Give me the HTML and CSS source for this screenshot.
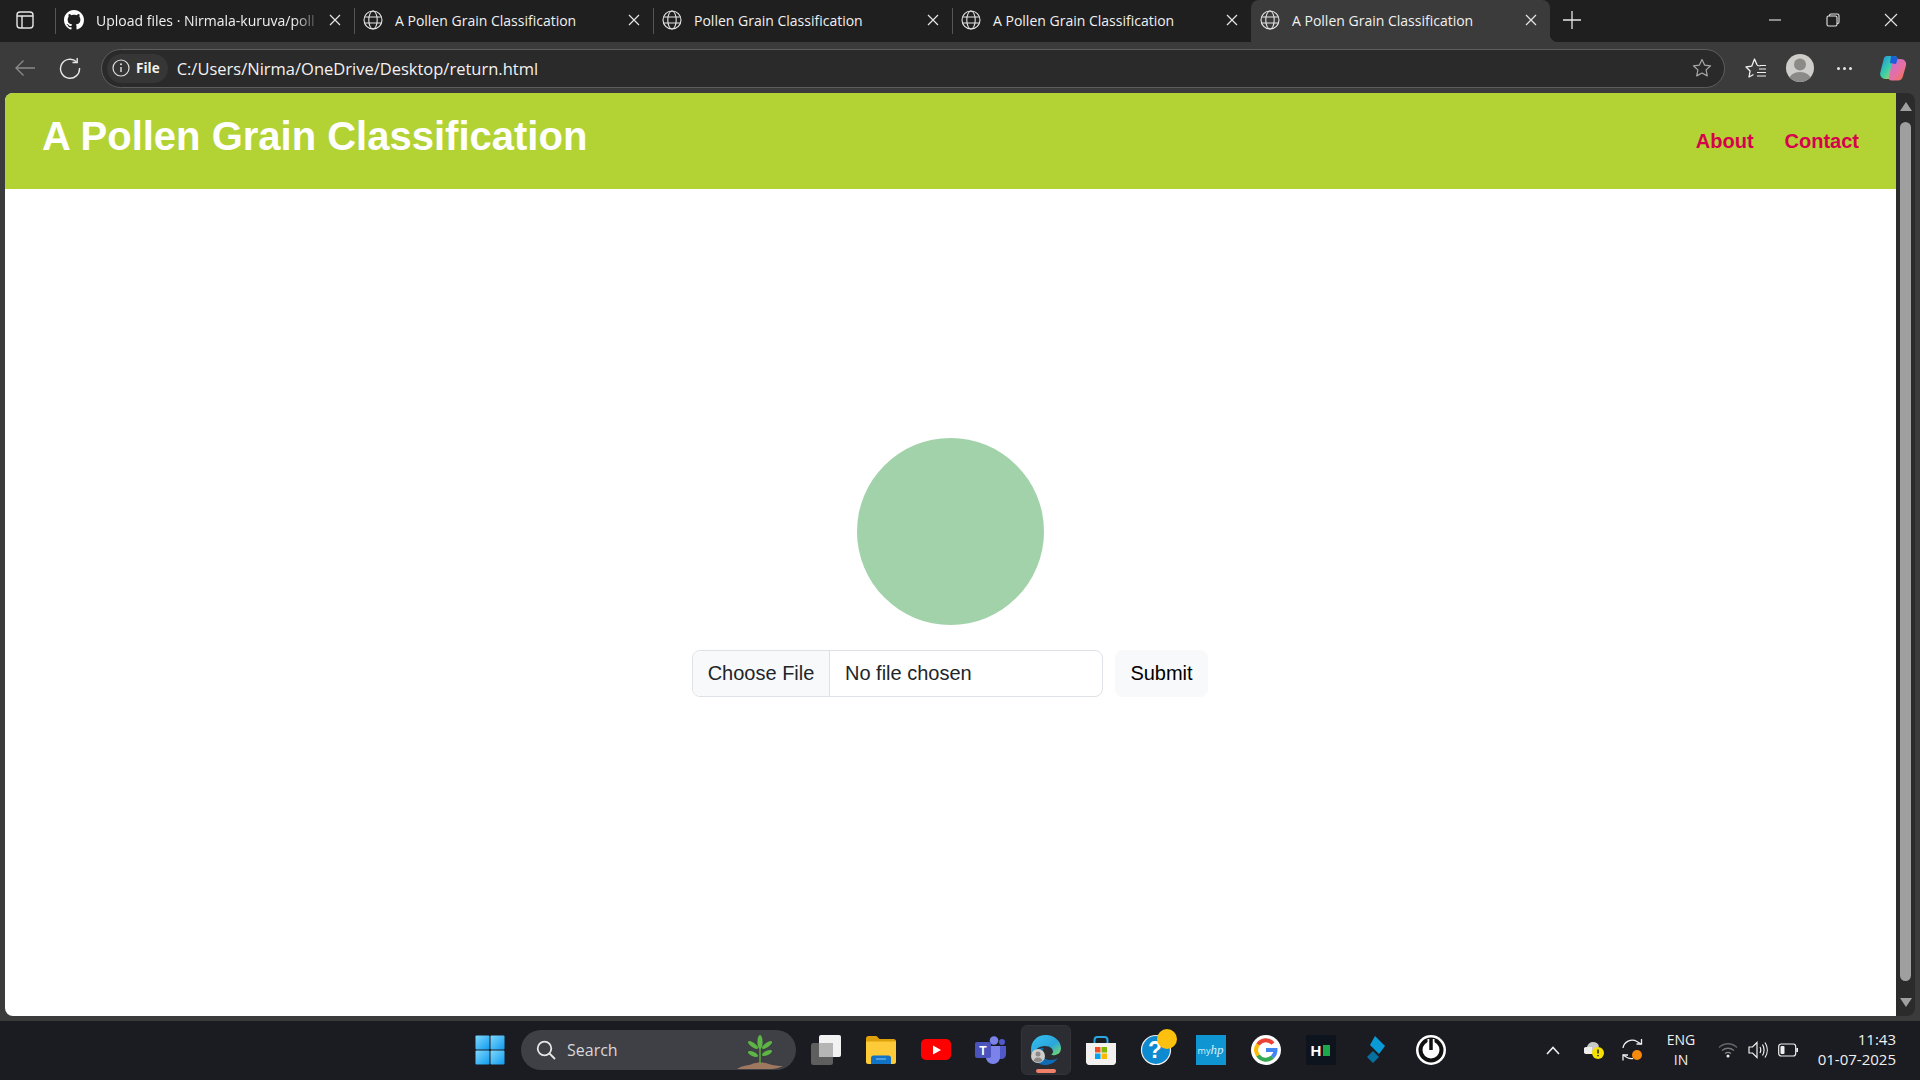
FILE: index.html
```html
<!DOCTYPE html>
<html lang="en">
<head>
  <meta charset="UTF-8">
  <title>A Pollen Grain Classification</title>
  <link rel="stylesheet" href="styles.css">
</head>
<body>
  <svg class="defs" width="0" height="0">
    <symbol id="globe" viewBox="0 0 20 20">
      <g fill="none" stroke="#e6e6e6" stroke-width="1.1">
        <circle cx="10" cy="10" r="9"/>
        <ellipse cx="10" cy="10" rx="4.2" ry="9"/>
        <path d="M1.6 7h16.8M1.6 13h16.8"/>
      </g>
    </symbol>
    <symbol id="close" viewBox="0 0 12 12">
      <path d="M1 1l10 10M11 1L1 11" fill="none" stroke="#e6e6e6" stroke-width="1.2"/>
    </symbol>
    <linearGradient id="edgeA" x1="0" y1="0" x2="1" y2="1">
      <stop offset="0" stop-color="#35c1f1"/>
      <stop offset="0.6" stop-color="#2aa5dc"/>
      <stop offset="1" stop-color="#7ee05a"/>
    </linearGradient>
    <linearGradient id="copA" x1="0" y1="0" x2="1" y2="1">
      <stop offset="0" stop-color="#1f8fe8"/>
      <stop offset="0.5" stop-color="#3ad0a8"/>
      <stop offset="1" stop-color="#f7c92f"/>
    </linearGradient>
    <linearGradient id="copB" x1="0" y1="0" x2="1" y2="1">
      <stop offset="0" stop-color="#c56ee0"/>
      <stop offset="0.6" stop-color="#e86f9c"/>
      <stop offset="1" stop-color="#f5752f"/>
    </linearGradient>
    <linearGradient id="winA" x1="0" y1="0" x2="1" y2="1">
      <stop offset="0" stop-color="#7fd8fb"/>
      <stop offset="1" stop-color="#0f9bf0"/>
    </linearGradient>
  </svg>

  <div class="tabstrip">
    <div class="sidebar-btn">
      <svg width="18" height="18" viewBox="0 0 18 18"><g fill="none" stroke="#e6e6e6" stroke-width="1.4"><rect x="1" y="1" width="16" height="16" rx="3"/><path d="M1 5h16M6 5v12"/></g></svg>
    </div>
    <div class="tab">
      <svg class="tab-icon" width="20" height="20" viewBox="0 0 16 16"><path fill="#fff" d="M8 0C3.58 0 0 3.58 0 8c0 3.54 2.29 6.53 5.47 7.59.4.07.55-.17.55-.38 0-.19-.01-.82-.01-1.49-2.01.37-2.53-.49-2.69-.94-.09-.23-.48-.94-.82-1.13-.28-.15-.68-.52-.01-.53.63-.01 1.08.58 1.23.82.72 1.21 1.87.87 2.33.66.07-.52.28-.87.51-1.07-1.78-.2-3.64-.89-3.64-3.95 0-.87.31-1.59.82-2.15-.08-.2-.36-1.02.08-2.12 0 0 .67-.21 2.2.82.64-.18 1.32-.27 2-.27.68 0 1.36.09 2 .27 1.53-1.04 2.2-.82 2.2-.82.44 1.1.16 1.92.08 2.12.51.56.82 1.27.82 2.15 0 3.07-1.87 3.75-3.65 3.95.29.25.54.73.54 1.48 0 1.07-.01 1.93-.01 2.2 0 .21.15.46.55.38A8.013 8.013 0 0016 8c0-4.42-3.58-8-8-8z"/></svg>
      <span class="tab-title tab-title-fade">Upload files · Nirmala-kuruva/poll</span>
      <svg class="tab-close" width="12" height="12"><use href="#close"/></svg>
    </div>
    <div class="tab">
      <svg class="tab-icon" width="20" height="20"><use href="#globe"/></svg>
      <span class="tab-title">A Pollen Grain Classification</span>
      <svg class="tab-close" width="12" height="12"><use href="#close"/></svg>
    </div>
    <div class="tab">
      <svg class="tab-icon" width="20" height="20"><use href="#globe"/></svg>
      <span class="tab-title">Pollen Grain Classification</span>
      <svg class="tab-close" width="12" height="12"><use href="#close"/></svg>
    </div>
    <div class="tab">
      <svg class="tab-icon" width="20" height="20"><use href="#globe"/></svg>
      <span class="tab-title">A Pollen Grain Classification</span>
      <svg class="tab-close" width="12" height="12"><use href="#close"/></svg>
    </div>
    <div class="tab tab-active">
      <svg class="tab-icon" width="20" height="20"><use href="#globe"/></svg>
      <span class="tab-title">A Pollen Grain Classification</span>
      <svg class="tab-close" width="12" height="12"><use href="#close"/></svg>
    </div>
    <svg class="new-tab" width="18" height="18" viewBox="0 0 18 18"><path d="M9 0v18M0 9h18" stroke="#e6e6e6" stroke-width="1.3"/></svg>
    <div class="win-controls">
      <svg width="14" height="14" viewBox="0 0 14 14"><path d="M1 7h12" stroke="#e6e6e6" stroke-width="1.1"/></svg>
      <svg width="14" height="14" viewBox="0 0 14 14"><g fill="none" stroke="#e6e6e6" stroke-width="1.1"><rect x="1" y="3" width="10" height="10" rx="1.5"/><path d="M3.5 3V2.5A1.5 1.5 0 0 1 5 1h6.5A1.5 1.5 0 0 1 13 2.500V9a1.500 1.500 0 0 1-1.500 1.500H11"/></g></svg>
      <svg width="14" height="14" viewBox="0 0 14 14"><path d="M1 1l12 12M13 1L1 13" stroke="#e6e6e6" stroke-width="1.1"/></svg>
    </div>
  </div>

  <div class="toolbar">
    <svg class="tool-back" width="22" height="18" viewBox="0 0 22 18"><path d="M21 9H2M9.500 1.500L2 9l7.500 7.500" fill="none" stroke="#8a8a8a" stroke-width="1.3"/></svg>
    <svg class="tool-reload" width="22" height="22" viewBox="0 0 22 22"><path d="M17.500 4.800A9.500 9.500 0 1 0 20.500 11" fill="none" stroke="#e8e8e8" stroke-width="1.4"/><path d="M18.200 1v4.500h-4.700" fill="none" stroke="#e8e8e8" stroke-width="1.4"/></svg>
    <div class="address">
      <div class="file-pill">
        <svg width="18" height="18" viewBox="0 0 18 18"><circle cx="9" cy="9" r="8" fill="none" stroke="#e0e0e0" stroke-width="1.2"/><path d="M9 8v5" stroke="#e0e0e0" stroke-width="1.4"/><circle cx="9" cy="5.300" r="1" fill="#e0e0e0"/></svg>
        <span>File</span>
      </div>
      <span class="url">C:/Users/Nirma/OneDrive/Desktop/return.html</span>
      <svg class="addr-star" width="20" height="20" viewBox="0 0 20 20"><path d="M10 1.500l2.600 5.600 6 .7-4.500 4.100 1.200 6L10 15l-5.300 2.900 1.200-6L1.400 7.800l6-.7z" fill="none" stroke="#a8a8a8" stroke-width="1.200" stroke-linejoin="round"/></svg>
    </div>
    <svg class="tool-fav" width="22" height="22" viewBox="0 0 22 22"><path d="M8.500 17.500L4 20l1.100-6L1 10l5.700-.8L9.500 2l2.600 6" fill="none" stroke="#f0f0f0" stroke-width="1.300" stroke-linejoin="round"/><path d="M12 8.500l3.500.5M14 12h7M12 15.500h9M12 19h9M15 8.500h6" fill="none" stroke="#f0f0f0" stroke-width="1.200"/></svg>
    <svg class="tool-avatar" width="28" height="28" viewBox="0 0 28 28"><defs><clipPath id="avatarClip"><circle cx="14" cy="14" r="14"/></clipPath></defs><circle cx="14" cy="14" r="14" fill="#cfcdca"/><g clip-path="url(#avatarClip)" fill="#8c8a88"><circle cx="14" cy="10.500" r="6"/><ellipse cx="14" cy="26" rx="11" ry="8"/></g></svg>
    <div class="tool-dots"><i></i><i></i><i></i></div>
    <svg class="tool-copilot" width="28" height="28" viewBox="0 0 28 28">
      <path d="M8 2h7c2 0 3 1 3.600 3l-5 17c-.5 2-2 3-4 3H6.500C3 25 .5 22 1.300 18.500L4.500 6C5 3.500 6 2 8 2z" fill="url(#copA)"/>
      <path d="M13 8c.6-2 1.600-3 3.600-3h5C25.500 5 27.800 8 27 11.500L24 22c-.7 3-2.500 4.500-5 4.500h-6.500c-2 0-3-1-2.500-3z" fill="url(#copB)"/>
      <path d="M12 2h3c2 0 3 1 3.600 3L17 10l-6-1z" fill="#1b5fd6"/>
    </svg>
  </div>

  <div class="viewport">
    <div class="page">
      <header class="site-header">
        <h1>A Pollen Grain Classification</h1>
        <nav class="site-nav">
          <a href="#">About</a>
          <a href="#">Contact</a>
        </nav>
      </header>
      <main class="upload">
        <div class="preview-circle"></div>
        <form class="upload-form">
          <div class="file-input">
            <span class="file-btn">Choose File</span>
            <span class="file-name">No file chosen</span>
          </div>
          <button type="button" class="submit-btn">Submit</button>
        </form>
      </main>
    </div>
    <div class="scrollbar">
      <span class="arrow-up"></span>
      <span class="thumb"></span>
      <span class="arrow-down"></span>
    </div>
  </div>

  <footer class="taskbar">
    <div class="task-icon task-win">
      <svg width="30" height="30" viewBox="0 0 30 30"><g fill="url(#winA)"><rect x="0.500" y="0.500" width="14" height="14" rx="1"/><rect x="15.500" y="0.500" width="14" height="14" rx="1"/><rect x="0.500" y="15.500" width="14" height="14" rx="1"/><rect x="15.500" y="15.500" width="14" height="14" rx="1"/></g></svg>
    </div>
    <div class="task-search">
      <svg width="20" height="20" viewBox="0 0 20 20"><circle cx="8.500" cy="8.500" r="6.800" fill="none" stroke="#e6e6e6" stroke-width="1.800"/><path d="M13.500 13.500L19 19" stroke="#e6e6e6" stroke-width="1.800"/></svg>
      <span>Search</span>
      <svg class="plant" width="46" height="36" viewBox="0 0 46 36">
        <path d="M0 35c6-4 10-3 15-5 5-2 12-2 17 0 4 1.500 9 2 14 2-4 2-8 3-12 3H4z" fill="#a07860"/>
        <path d="M23 30V12" stroke="#59a83a" stroke-width="1.500"/>
        <g fill="#5cb545"><ellipse cx="23" cy="8" rx="2.600" ry="7"/><ellipse cx="16" cy="11" rx="6" ry="2.200" transform="rotate(35 16 11)"/><ellipse cx="30" cy="11" rx="6" ry="2.200" transform="rotate(-35 30 11)"/><ellipse cx="16" cy="20" rx="5.500" ry="2.200" transform="rotate(25 16 20)"/><ellipse cx="30" cy="19" rx="5.500" ry="2.200" transform="rotate(-25 30 19)"/></g>
      </svg>
    </div>
    <div class="task-icons">
      <div class="task-icon">
        <svg width="30" height="30" viewBox="0 0 30 30"><rect x="0" y="8" width="22" height="22" rx="2.500" fill="#5e5e5e"/><rect x="8" y="0" width="22" height="22" rx="2" fill="#f2f2f2"/><rect x="8" y="8" width="14" height="14" fill="#b5b5b5"/></svg>
      </div>
      <div class="task-icon">
        <svg width="30" height="28" viewBox="0 0 30 28"><path d="M0 2.500C0 1 1 0 2.500 0h8l3 3h14C29 3 30 4 30 5v2H0z" fill="#dea10c"/><path d="M0 5.500h30V26c0 1-1 2-2 2H2c-1 0-2-1-2-2z" fill="#fdca3a"/><path d="M5 28v-6c0-1.500 1-2.500 2.500-2.500h15c1.500 0 2.500 1 2.500 2.500v6z" fill="#1073c6"/><path d="M10 23h10" stroke="#8fc8ef" stroke-width="1"/></svg>
      </div>
      <div class="task-icon">
        <svg width="30" height="22" viewBox="0 0 30 22"><rect width="30" height="21" rx="5" fill="#f00"/><path d="M12 6.500l8 4.500-8 4.500z" fill="#fff"/></svg>
      </div>
      <div class="task-icon">
        <svg width="32" height="28" viewBox="0 0 32 28"><circle cx="19" cy="4.500" r="4.300" fill="#7b83eb"/><circle cx="27" cy="6" r="3" fill="#5059c9"/><path d="M23 10h8v8c0 3-2 5-5 5-1 0-2-.3-3-1z" fill="#5059c9"/><path d="M11 10h14v11c0 4-3 7-7 7s-7-3-7-7z" fill="#7b83eb"/><rect x="0" y="6" width="16" height="16" rx="2" fill="#4b53bc"/><text x="8" y="18.500" class="teams-t">T</text></svg>
      </div>
      <div class="task-icon task-active">
        <svg width="30" height="30" viewBox="0 0 30 30"><path d="M15 0C6 0 0 6 0 15c0 2 .4 3.600 1 5 2-5 7-9 13-9 6 0 8 3.500 8 5.500 0 1.500-1 2.500-2 3.300 3 1.200 10 .2 10-6.800C30 6 23 0 15 0z" fill="url(#edgeA)"/><path d="M1 20c1 5.500 7 10 13 10 5 0 10-2.500 13-7-3 2-9 3-13 .5-2-1.300-3-3.500-3-5.500s1-4 2-5C7.500 12.500 2.500 15.500 1 20z" fill="#0f6cb4"/><circle cx="7" cy="21" r="7" fill="#cfcdca"/><circle cx="7" cy="19" r="2.500" fill="#8c8a88"/><path d="M2.500 25.500c1-2.500 3-3 4.500-3s3.500.5 4.500 3a7 7 0 0 1-9 0z" fill="#8c8a88"/></svg>
        <span class="active-bar"></span>
      </div>
      <div class="task-icon">
        <svg width="30" height="30" viewBox="0 0 30 30"><path d="M8.500 8V5a3 3 0 0 1 3-3h7a3 3 0 0 1 3 3v3" fill="none" stroke="#2aa6e0" stroke-width="2"/><path d="M0 8h30v19c0 1.500-1.500 3-3 3H3c-1.500 0-3-1.500-3-3z" fill="#f3f1ef"/><rect x="9" y="12" width="5.500" height="5.500" fill="#f25022"/><rect x="15.500" y="12" width="5.500" height="5.500" fill="#7fba00"/><rect x="9" y="18.500" width="5.500" height="5.500" fill="#00a4ef"/><rect x="15.500" y="18.500" width="5.500" height="5.500" fill="#ffb900"/></svg>
      </div>
      <div class="task-icon">
        <svg width="42" height="42" viewBox="0 0 42 42"><circle cx="21" cy="21" r="14.500" fill="#0e8ad0" stroke="#eee" stroke-width="1.200"/><text x="20" y="29" class="help-q">?</text><circle cx="32" cy="10" r="10" fill="#fdc00f"/></svg>
      </div>
      <div class="task-icon">
        <div class="myhp"><span>my</span><em>hp</em></div>
      </div>
      <div class="task-icon">
        <svg width="30" height="30" viewBox="0 0 30 30"><circle cx="15" cy="15" r="15" fill="#fff"/><g fill="none" stroke-width="4"><path d="M22 8.500A9.500 9.500 0 0 0 7 9.500" stroke="#ea4335"/><path d="M7 9.500a9.500 9.500 0 0 0 0 11" stroke="#fbbc05"/><path d="M7 20.500a9.500 9.500 0 0 0 14.500 1.500" stroke="#34a853"/><path d="M21.500 22a9.500 9.500 0 0 0 3-7H15" stroke="#4285f4"/></g></svg>
      </div>
      <div class="task-icon">
        <div class="hr-logo"><span>H</span><i></i></div>
      </div>
      <div class="task-icon">
        <svg width="18" height="28" viewBox="0 0 18 28"><path d="M8 0l10 10-6 8-9-9z" fill="#0a9bd6"/><path d="M0 21l6-6 6 6-6 6z" fill="#08709f"/></svg>
      </div>
      <div class="task-icon">
        <svg width="30" height="30" viewBox="0 0 30 30"><circle cx="15" cy="15" r="15" fill="#fff"/><circle cx="15" cy="15" r="10.500" fill="none" stroke="#111" stroke-width="4"/><path d="M15 4v11" stroke="#fff" stroke-width="7"/><path d="M15 3v12" stroke="#111" stroke-width="3.500"/></svg>
      </div>
    </div>
    <div class="tray">
      <svg class="tray-chevron" width="14" height="9" viewBox="0 0 14 9"><path d="M1 8l6-6.500L13 8" fill="none" stroke="#f0f0f0" stroke-width="1.600"/></svg>
      <svg class="tray-cloud" width="20" height="18" viewBox="0 0 20 18"><path d="M3 13a3.500 3.500 0 0 1 0-7c.6-3 3-5 6-5s5 1.500 6 4l-4 8z" fill="#c8c8c8"/><path d="M3 13a3.500 3.500 0 0 1 0-7h5v7z" fill="#eee"/><circle cx="14" cy="12" r="6" fill="#f5e000"/><path d="M14 8.500v4M14 14v1.300" stroke="#222" stroke-width="1.500"/></svg>
      <svg class="tray-sync" width="22" height="24" viewBox="0 0 22 24"><g fill="none" stroke="#f0f0f0" stroke-width="1.300"><path d="M1 10C2 4 9 0 15 3.500l4 2.500"/><path d="M19.500 1v5h-5"/><path d="M1 17l4 2.500c2 1 4 1.500 6 1"/><path d="M1 22.500v-5.500h5"/></g><circle cx="15" cy="17" r="5" fill="#f7890c"/></svg>
      <div class="tray-lang">ENG<br>IN</div>
      <svg class="tray-wifi" width="20" height="16" viewBox="0 0 20 16"><g fill="none" stroke-width="1.300"><path d="M1 5.500c5-5 13-5 18 0" stroke="#666"/><path d="M4 8.500c3.500-3 8.500-3 12 0" stroke="#777"/><path d="M7 11.500c2-1.500 4-1.500 6 0" stroke="#888"/></g><circle cx="10" cy="14" r="1.500" fill="#eee"/></svg>
      <svg class="tray-vol" width="20" height="18" viewBox="0 0 20 18"><g fill="none" stroke="#f0f0f0" stroke-width="1.200"><path d="M1 6h3.500L9 1.500v15L4.500 12H1z"/><path d="M12 6c1 2 1 4 0 6M14.500 3.500c2 3.500 2 7.500 0 11M17 1.500c3 4.500 3 10.500 0 15"/></g></svg>
      <svg class="tray-batt" width="20" height="14" viewBox="0 0 20 14"><rect x="0.700" y="1" width="17" height="12" rx="2.500" fill="none" stroke="#f0f0f0" stroke-width="1.200"/><rect x="2.500" y="3" width="4" height="8" rx="1" fill="#f0f0f0"/><rect x="18.300" y="5" width="1.700" height="4" fill="#f0f0f0"/></svg>
      <div class="tray-clock">11:43<br>01-07-2025</div>
    </div>
  </footer>
</body>
</html>
```

FILE: styles.css
```css
* {
  box-sizing: border-box;
}

html, body {
  height: 100%;
}

body {
  margin: 0;
  overflow: hidden;
  display: flex;
  flex-direction: column;
  background: #3b3b3b;
  font-family: "Liberation Sans", Arial, sans-serif;
}

.defs {
  position: absolute;
}

/* Browser tab strip */
.tabstrip {
  height: 42px;
  padding-bottom: 2px;
  flex-shrink: 0;
  display: flex;
  align-items: center;
  background: #1f1f1f;
  font-family: "Open Sans", sans-serif;
  font-size: 14px;
  color: #f0f0f0;
}

.sidebar-btn {
  width: 55px;
  padding-left: 16px;
  display: flex;
}

.tab {
  position: relative;
  width: 299px;
  height: 42px;
  margin-bottom: -2px;
  padding: 0 13px 2px 9px;
  display: flex;
  align-items: center;
  flex-shrink: 0;
}

.tab::before {
  content: "";
  position: absolute;
  left: 0;
  top: 8px;
  height: 26px;
  border-left: 1px solid #555;
}

.tab-icon {
  margin-right: 12px;
  flex-shrink: 0;
}

.tab-title {
  flex: 1;
  white-space: nowrap;
}

.tab-title-fade {
  -webkit-mask-image: linear-gradient(to right, #000 88%, transparent 100%);
  mask-image: linear-gradient(to right, #000 88%, transparent 100%);
}

.tab-close {
  margin-left: 8px;
  flex-shrink: 0;
}

.tab-active {
  background: #3b3b3b;
  border-radius: 8px 8px 0 0;
}

.tab-active::before {
  display: none;
}

.tab-active::after {
  content: "";
  position: absolute;
  right: -8px;
  bottom: 0;
  width: 8px;
  height: 8px;
  background: radial-gradient(circle at 100% 0, #1f1f1f 8px, #3b3b3b 8.5px);
}

.new-tab {
  margin-left: 13px;
}

.win-controls {
  margin-left: auto;
  width: 152px;
  padding-right: 22px;
  display: flex;
  justify-content: space-between;
}

/* Address bar row */
.toolbar {
  height: 51px;
  flex-shrink: 0;
  display: flex;
  align-items: center;
  padding-left: 14px;
  padding-top: 1px;
}

.tool-reload {
  margin-left: 23px;
}

.address {
  width: 1624px;
  height: 39px;
  margin-left: 20px;
  padding: 0 12px 0 5px;
  display: flex;
  align-items: center;
  background: #2a2a2a;
  border: 1px solid #5e5e5e;
  border-radius: 20px;
}

.file-pill {
  height: 29px;
  padding: 0 8px 0 5px;
  display: flex;
  align-items: center;
  gap: 6px;
  background: #363636;
  border-radius: 15px;
  font-family: "Open Sans", sans-serif;
  font-size: 13.500px;
  font-weight: 700;
  color: #f2f2f2;
}

.url {
  margin-left: 9px;
  font-family: "Open Sans", sans-serif;
  font-size: 16.500px;
  color: #f2f2f2;
}

.addr-star {
  margin-left: auto;
}

.tool-fav {
  margin-left: 20px;
}

.tool-avatar {
  margin-left: 19px;
}

.tool-dots {
  margin-left: 23px;
  display: flex;
  gap: 3px;
}

.tool-dots i {
  width: 3px;
  height: 3px;
  background: #e6e6e6;
  border-radius: 50%;
}

.tool-copilot {
  margin-left: 27px;
}

/* Page area */
.viewport {
  height: 923px;
  flex-shrink: 0;
  display: flex;
  padding-left: 5px;
}

.page {
  width: 1891px;
  display: flex;
  flex-direction: column;
  background: #fff;
  border-radius: 8px 0 0 8px;
  overflow: hidden;
}

.site-header {
  height: 96px;
  flex-shrink: 0;
  padding: 0 37px;
  display: flex;
  align-items: center;
  justify-content: space-between;
  background: #b3d334;
}

.site-header h1 {
  margin: 0 0 10px;
  font-size: 40px;
  line-height: 48px;
  font-weight: 700;
  color: #fff;
}

.site-nav {
  display: flex;
  gap: 31px;
}

.site-nav a {
  font-size: 20px;
  font-weight: 700;
  color: #d6004f;
  text-decoration: none;
}

.upload {
  padding-top: 249px;
  display: flex;
  flex-direction: column;
  align-items: center;
}

.preview-circle {
  width: 187px;
  height: 187px;
  background: #a2d2a9;
  border-radius: 50%;
}

.upload-form {
  margin-top: 25px;
  padding-right: 1px;
  display: flex;
  gap: 12px;
}

.file-input {
  width: 411px;
  height: 47px;
  display: flex;
  background: #fff;
  border: 1px solid #dee2e6;
  border-radius: 8px;
  font-size: 20px;
  color: #212529;
  overflow: hidden;
}

.file-btn {
  width: 137px;
  display: flex;
  align-items: center;
  justify-content: center;
  background: #f8f9fa;
  border-right: 1px solid #dee2e6;
}

.file-name {
  padding-left: 15px;
  display: flex;
  align-items: center;
}

.submit-btn {
  width: 93px;
  height: 47px;
  padding: 0;
  background: #f8f9fa;
  border: 0;
  border-radius: 8px;
  font-family: inherit;
  font-size: 20px;
  color: #000;
}

/* Scrollbar */
.scrollbar {
  width: 19px;
  padding: 9px 4px 7px;
  display: flex;
  flex-direction: column;
  align-items: center;
  background: #2b2b2b;
  border-radius: 0 8px 8px 0;
}

.arrow-up, .arrow-down {
  width: 0;
  height: 0;
  border-left: 6px solid transparent;
  border-right: 6px solid transparent;
}

.arrow-up {
  border-bottom: 9px solid #a0a0a0;
}

.arrow-down {
  border-top: 9px solid #a0a0a0;
}

.thumb {
  width: 11px;
  height: 859px;
  margin: 11px 0 17px;
  background: #9f9f9f;
  border-radius: 6px;
}

/* Windows taskbar */
.taskbar {
  height: 59px;
  margin-top: 5px;
  flex-shrink: 0;
  display: flex;
  align-items: center;
  padding-left: 467px;
  padding-bottom: 1px;
  background: #1b1b22;
  font-family: "Open Sans", sans-serif;
  color: #f0f0f0;
}

.task-icon {
  position: relative;
  width: 45px;
  height: 50px;
  flex-shrink: 0;
  display: flex;
  align-items: center;
  justify-content: center;
}

.task-win {
  margin-right: 9px;
}

.task-search {
  width: 275px;
  height: 40px;
  padding-left: 15px;
  display: flex;
  align-items: center;
  background: #3f3f46;
  border-radius: 20px;
  font-size: 16px;
  color: #d8d8d8;
  overflow: hidden;
}

.task-search span {
  margin-left: 11px;
}

.plant {
  margin-left: auto;
  margin-right: 13px;
  align-self: flex-end;
}

.task-icons {
  margin-left: 7px;
  display: flex;
  gap: 10px;
}

.task-active {
  width: 50px;
  margin: 0 -2.500px;
  background: #2c2c33;
  border: 1px solid #33333a;
  border-radius: 6px;
}

.active-bar {
  position: absolute;
  bottom: 1px;
  left: 14px;
  width: 20px;
  height: 4px;
  background: #f0806a;
  border-radius: 2px;
}

.teams-t {
  font-family: "Liberation Sans", sans-serif;
  font-size: 12px;
  font-weight: 700;
  fill: #fff;
  text-anchor: middle;
}

.help-q {
  font-family: "Liberation Sans", sans-serif;
  font-size: 23px;
  font-weight: 700;
  fill: #fff;
  text-anchor: middle;
}

.myhp {
  width: 30px;
  height: 30px;
  display: flex;
  align-items: center;
  justify-content: center;
  background: #0f95d1;
  font-size: 9px;
  color: #d8f0fa;
}

.myhp em {
  font-family: "Liberation Serif", serif;
  font-size: 13px;
}

.hr-logo {
  width: 30px;
  height: 30px;
  display: flex;
  align-items: center;
  justify-content: center;
  gap: 2px;
  background: #0e141e;
  font-family: "Liberation Sans", sans-serif;
  font-size: 15px;
  font-weight: 700;
  color: #fff;
}

.hr-logo i {
  width: 7px;
  height: 11px;
  background: #1ba94c;
}

.tray {
  margin-left: auto;
  padding-right: 24px;
  display: flex;
  align-items: center;
}

.tray-cloud {
  margin-left: 24px;
}

.tray-sync {
  margin-left: 18px;
}

.tray-lang {
  width: 50px;
  margin-left: 12px;
  margin-top: -1px;
  font-size: 14px;
  line-height: 20px;
  text-align: center;
}

.tray-wifi {
  margin-left: 12px;
}

.tray-vol {
  margin-left: 10px;
}

.tray-batt {
  margin-left: 10px;
}

.tray-clock {
  width: 90px;
  margin-left: 8px;
  margin-top: -2px;
  font-size: 15px;
  line-height: 20px;
  text-align: right;
}
```
